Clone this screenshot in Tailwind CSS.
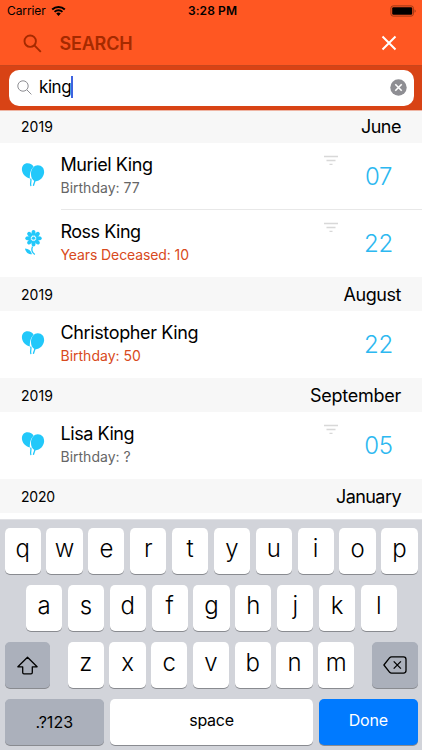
<!DOCTYPE html>
<html lang="en">
<head>
<meta charset="utf-8">
<title>Search</title>
<script src="https://cdn.jsdelivr.net/npm/@tailwindcss/browser@4"></script>
</head>
<body class="w-[422px] h-[750px] overflow-hidden bg-white text-black font-['Inter','Liberation_Sans',sans-serif]">
<svg class="hidden">
  <symbol id="balloons" viewBox="0 0 24 26">
    <path d="M6.600 1.300C3 1.300.8 4 .9 7.500c.2 4.200 3.500 7.900 8 9C8.700 12.600 9.300 7.800 12.600 4.800 11.500 2.800 9.300 1.300 6.600 1.300Z"/>
    <path d="M16.800 3.300c4 0 6.400 3 6.300 6.900-.2 4.700-3.800 8.700-8.900 9.200-3.300-1.200-4.500-5.300-4.200-8.700C10.400 6.500 13.100 3.300 16.800 3.300Z"/>
    <path d="M9.600 16.500c1.300 2.500-.9 4 .3 7.600M13.700 19c.1 2-1.300 2.800-1.200 4.900" fill="none" stroke="currentColor" stroke-width="1.300"/>
  </symbol>
  <symbol id="flower" viewBox="0 0 20 27">
    <g transform="translate(10.500 9.200)">
      <ellipse cx="0" cy="-5.200" rx="2" ry="3"/>
      <ellipse cx="0" cy="-5.200" rx="2" ry="3" transform="rotate(45)"/>
      <ellipse cx="0" cy="-5.200" rx="2" ry="3" transform="rotate(90)"/>
      <ellipse cx="0" cy="-5.200" rx="2" ry="3" transform="rotate(135)"/>
      <ellipse cx="0" cy="-5.200" rx="2" ry="3" transform="rotate(180)"/>
      <ellipse cx="0" cy="-5.200" rx="2" ry="3" transform="rotate(225)"/>
      <ellipse cx="0" cy="-5.200" rx="2" ry="3" transform="rotate(270)"/>
      <ellipse cx="0" cy="-5.200" rx="2" ry="3" transform="rotate(315)"/>
      <circle r="2.500" fill="none" stroke="white" stroke-width=".4"/>
      <circle r="1.600"/>
    </g>
    <path d="M9.500 17.500c-1.200 3-.7 6 2.300 8" fill="none" stroke="currentColor" stroke-width="1.300"/>
    <path d="M2 19.500c3.500.2 6 2 7 5.800-3.800 0-6.300-1.800-7-5.800Z"/>
  </symbol>
  <symbol id="filter" viewBox="0 0 14 11">
    <path d="M0 1.500h14M2.500 5.500h9M5.500 9.300h3" fill="none" stroke="currentColor" stroke-width="1.300"/>
  </symbol>
</svg>

<header class="h-[65px] bg-[#ff5722]">
  <div class="h-[21px] pl-[7px] pr-[5px] grid grid-cols-3 items-center text-[12px] leading-[21px]">
    <div class="flex items-center gap-[5px]"><span class="tracking-[-0.1px]">Carrier</span>
      <svg class="w-[15px] h-[11px]" viewBox="0 0 15 11"><path d="M.5 3.800a10 10 0 0 1 14 0L13.100 5.200a8 8 0 0 0-11.200 0ZM2.900 6.200a6.600 6.600 0 0 1 9.200 0L10.700 7.600a4.600 4.600 0 0 0-6.400 0ZM5.200 8.500a3.300 3.300 0 0 1 4.600 0L7.500 10.900Z"/></svg>
    </div>
    <div class="text-center font-semibold tracking-[0.1px] pl-px">3:28 PM</div>
    <svg class="justify-self-end w-[27px] h-[12px]" viewBox="0 0 27 12"><rect x=".9" y=".9" width="22.500" height="10.200" rx="2.300" fill="none" stroke="#8f3414" stroke-width=".9"/><rect x="2.200" y="2.200" width="20" height="7.600" rx="1.200"/><path d="M24.600 4.200q2 1.800 0 3.600Z" fill="#8f3414"/></svg>
  </div>
  <div class="h-[44px] pl-[23px] pr-[25px] flex items-center">
    <svg class="w-[19px] h-[19px]" viewBox="0 0 19 19" fill="none" stroke="#a52a00" stroke-width="1.900"><circle cx="7.200" cy="7.200" r="5.700"/><path d="m11.400 11.400 6.400 6.400"/></svg>
    <h1 class="ml-[17.500px] text-[18px] font-semibold text-[#a52a00] tracking-[-0.2px]">SEARCH</h1>
    <svg class="ml-auto w-[16px] h-[16px]" viewBox="0 0 16 16" stroke="white" stroke-width="2"><path d="m1.500 1.500 13 13m0-13-13 13"/></svg>
  </div>
</header>
<div class="h-[45px] bg-[#d84315] border-t border-[#c9461c] pt-[3.500px] px-[8.500px]">
  <div class="h-[36.500px] rounded-[10px] bg-white flex items-center pl-[8px] pr-[7px]">
    <svg class="w-[15px] h-[15px]" viewBox="0 0 15 15" fill="none" stroke="#8e8e93" stroke-width="1"><circle cx="6" cy="6" r="5.200"/><path d="m9.800 9.800 4.600 4.600"/></svg>
    <span class="ml-[7.500px] text-[17px] tracking-[-0.45px]">king</span><span class="w-[1.500px] h-[22px] bg-[#3e63e0] -mt-[2px]"></span>
    <svg class="ml-auto w-[17px] h-[17px]" viewBox="0 0 17 17"><circle cx="8.500" cy="8.500" r="8.200" fill="#8e8e93"/><path d="m5.300 5.300 6.400 6.400m0-6.400-6.400 6.400" stroke="white" stroke-width="1.600"/></svg>
  </div>
</div>

<main class="h-[409px] overflow-hidden">
  <div class="h-[33px] bg-[#f7f7f7] border-t border-[#eeb5a4] flex items-center justify-between px-[21px]"><span class="text-[14px] tracking-[0.05px] -mt-[2px]">2019</span><span class="text-[18px] tracking-[-0.5px] -mt-[1px]">June</span></div>
  <div class="h-[67px] flex pl-[21px]">
    <svg class="mt-[19px] w-[24px] h-[26px] text-[#22c8fa] fill-current"><use href="#balloons"/></svg>
    <div class="ml-[15.500px] flex-1 flex border-b border-[#e8e8e8]">
      <div class="pt-[10px] flex-1"><div class="text-[18px] leading-[24px] tracking-[-0.42px]">Muriel King</div><div class="text-[14px] leading-[22px] text-[#666]">Birthday: 77</div></div>
      <svg class="mt-[12px] w-[14px] h-[11px] text-[#d8d8d8]"><use href="#filter"/></svg>
      <div class="w-[84px] pr-[3px] text-center text-[24px] leading-[67px] font-[350] tracking-[-0.3px] text-[#2cb8f0]">07</div>
    </div>
  </div>
  <div class="h-[67px] flex pl-[23px]">
    <svg class="mt-[19px] w-[20px] h-[27px] text-[#22c8fa] fill-current"><use href="#flower"/></svg>
    <div class="ml-[17.500px] flex-1 flex">
      <div class="pt-[10px] flex-1"><div class="text-[18px] leading-[24px] tracking-[-0.5px]">Ross King</div><div class="text-[14px] leading-[22px] tracking-[-0.1px] text-[#d84a20]">Years Deceased: 10</div></div>
      <svg class="mt-[12px] w-[14px] h-[11px] text-[#d8d8d8]"><use href="#filter"/></svg>
      <div class="w-[84px] pr-[3px] text-center text-[24px] leading-[67px] font-[350] tracking-[-0.3px] text-[#2cb8f0]">22</div>
    </div>
  </div>
  <div class="h-[34px] bg-[#f7f7f7] flex items-center justify-between px-[21px]"><span class="text-[14px] tracking-[0.05px]">2019</span><span class="text-[18px] tracking-[-0.45px]">August</span></div>
  <div class="h-[67px] flex pl-[21px]">
    <svg class="mt-[19px] w-[24px] h-[26px] text-[#22c8fa] fill-current"><use href="#balloons"/></svg>
    <div class="ml-[15.500px] flex-1 flex">
      <div class="pt-[10px] flex-1"><div class="text-[18px] leading-[24px] tracking-[-0.37px]">Christopher King</div><div class="text-[14px] leading-[22px] text-[#d84a20]">Birthday: 50</div></div>
      <div class="w-[84px] pr-[3px] text-center text-[24px] leading-[67px] font-[350] tracking-[-0.3px] text-[#2cb8f0]">22</div>
    </div>
  </div>
  <div class="h-[34px] bg-[#f7f7f7] flex items-center justify-between px-[21px]"><span class="text-[14px] tracking-[0.05px]">2019</span><span class="text-[18px] tracking-[-0.25px]">September</span></div>
  <div class="h-[67px] flex pl-[21px]">
    <svg class="mt-[19px] w-[24px] h-[26px] text-[#22c8fa] fill-current"><use href="#balloons"/></svg>
    <div class="ml-[15.500px] flex-1 flex">
      <div class="pt-[10px] flex-1"><div class="text-[18px] leading-[24px] tracking-[-0.45px]">Lisa King</div><div class="text-[14px] leading-[22px] text-[#666]">Birthday: ?</div></div>
      <svg class="mt-[12px] w-[14px] h-[11px] text-[#d8d8d8]"><use href="#filter"/></svg>
      <div class="w-[84px] pr-[3px] text-center text-[24px] leading-[67px] font-[350] tracking-[-0.3px] text-[#2cb8f0]">05</div>
    </div>
  </div>
  <div class="h-[34px] bg-[#f7f7f7] flex items-center justify-between px-[21px]"><span class="text-[14px] tracking-[-0.2px]">2020</span><span class="text-[18px] tracking-[-0.55px]">January</span></div>
</main>

<section class="h-[231px] bg-[#d2d4da] border-t border-[#e0e1e5] pt-[8px] px-[4.500px] flex flex-col gap-[11px] text-[24px] leading-[42px] text-center [&_.k]:h-[46px] [&_.k]:rounded-[5px] [&_.k]:bg-white [&_.k]:font-[350] [&_.k]:shadow-[0_1px_0_#898b90]">
  <div class="grid grid-cols-10 gap-[5.600px]">
    <div class="k">q</div><div class="k">w</div><div class="k">e</div><div class="k">r</div><div class="k">t</div><div class="k">y</div><div class="k">u</div><div class="k">i</div><div class="k">o</div><div class="k">p</div>
  </div>
  <div class="grid grid-cols-9 gap-[5.600px] pl-[21.500px] pr-[20.500px]">
    <div class="k">a</div><div class="k">s</div><div class="k">d</div><div class="k">f</div><div class="k">g</div><div class="k">h</div><div class="k">j</div><div class="k">k</div><div class="k">l</div>
  </div>
  <div class="flex justify-between">
    <div class="w-[45.500px] h-[46px] rounded-[5px] bg-[#abb0bb] shadow-[0_1px_0_#898b90] flex items-center justify-center">
      <svg class="w-[21px] h-[19px]" viewBox="0 0 21 19" fill="none" stroke="black" stroke-width="1.300" stroke-linejoin="round"><path d="M10.500 1.200.9 10.800h4.800v5.700q0 1.300 1.300 1.300h7q1.300 0 1.300-1.300v-5.700h4.800Z"/></svg>
    </div>
    <div class="w-[286.500px] grid grid-cols-7 gap-[5.600px]">
      <div class="k">z</div><div class="k">x</div><div class="k">c</div><div class="k">v</div><div class="k">b</div><div class="k">n</div><div class="k">m</div>
    </div>
    <div class="w-[45.500px] h-[46px] rounded-[5px] bg-[#abb0bb] shadow-[0_1px_0_#898b90] flex items-center justify-center">
      <svg class="w-[24px] h-[18px]" viewBox="0 0 24 18" fill="none" stroke="black" stroke-width="1.300" stroke-linejoin="round"><path d="M8.500.9h12q2.500 0 2.500 2.500v11.200q0 2.500-2.500 2.500h-12q-1 0-1.800-.8L.9 9l5.800-7.300q.8-.8 1.800-.8ZM10.700 5.400l7.200 7.200m0-7.200-7.200 7.200"/></svg>
    </div>
  </div>
  <div class="flex gap-[6px] text-[16px]">
    <div class="w-[99.500px] h-[46px] rounded-[5px] bg-[#abb0bb] shadow-[0_1px_0_#898b90] leading-[46px]">.?123</div>
    <div class="flex-1 h-[46px] rounded-[5px] bg-white shadow-[0_1px_0_#898b90] leading-[43px] tracking-[-0.3px]">space</div>
    <div class="w-[98.500px] h-[46px] rounded-[5px] bg-[#007aff] shadow-[0_1px_0_#898b90] leading-[43px] tracking-[-0.2px] text-white">Done</div>
  </div>
</section>
</body>
</html>
